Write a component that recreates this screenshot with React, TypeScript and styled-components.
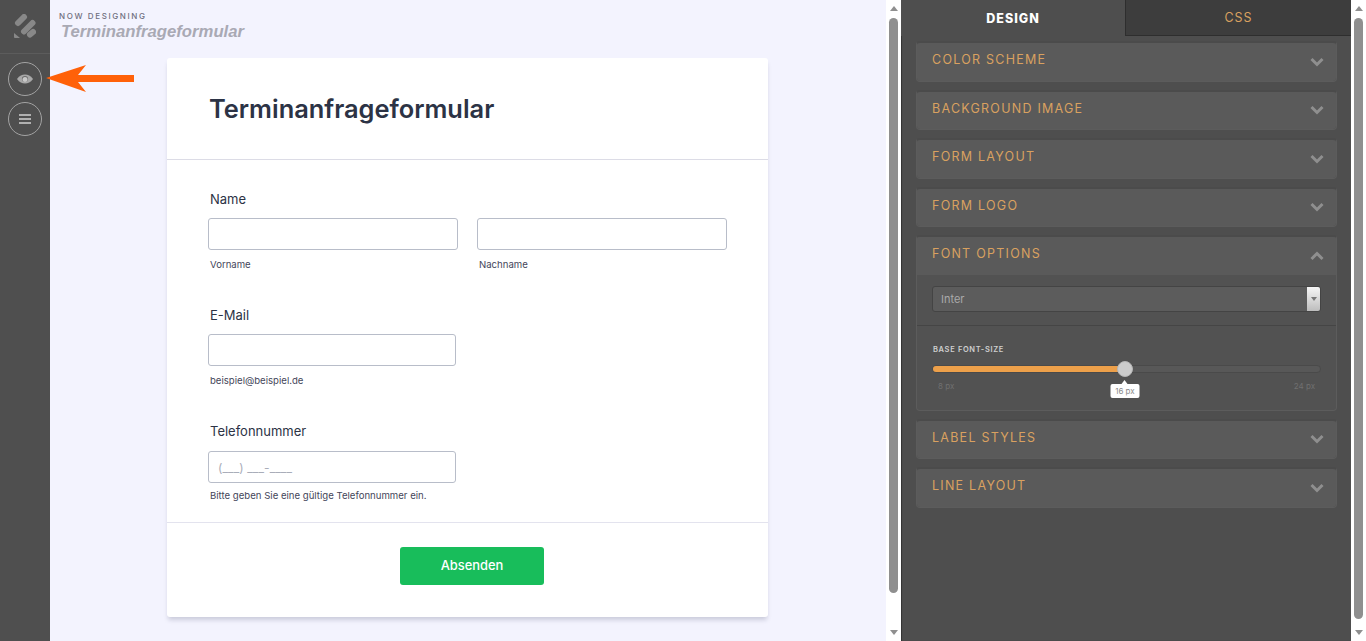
import React from "react";
import styled, { createGlobalStyle } from "styled-components";

const Global = createGlobalStyle`
  html, body { margin: 0; padding: 0; height: 641px; overflow: hidden; }
  body { font-family: Inter, "Liberation Sans", sans-serif; background: #f3f3fe; }
  * { box-sizing: border-box; }
`;

const Page = styled.div`
  display: flex;
  width: 1366px;
  height: 641px;
  overflow: hidden;
`;

const Rail = styled.aside`
  width: 50px;
  flex: none;
  background: #4f4f4f;
  display: flex;
  flex-direction: column;
  align-items: center;
`;

const RailLogo = styled.div`
  width: 100%;
  height: 54px;
  border-bottom: 1px solid #5c5c5c;
  display: flex;
  align-items: center;
  justify-content: center;
`;

const RailButtons = styled.div`
  display: flex;
  flex-direction: column;
  gap: 6px;
  padding-top: 8px;
`;

const RailButton = styled.button`
  width: 34px;
  height: 34px;
  padding: 0;
  border-radius: 50%;
  border: 1px solid #a3a3a3;
  background: transparent;
  display: flex;
  align-items: center;
  justify-content: center;
`;

const Canvas = styled.main`
  position: relative;
  flex: 1;
  min-width: 0;
  background: #f3f3fe;
  display: flex;
  flex-direction: column;
`;

const Heading = styled.header`
  height: 58px;
  flex: none;
  padding: 11px 0 0 9px;
`;

const Eyebrow = styled.div`
  font-size: 8px;
  line-height: 10px;
  font-weight: 500;
  letter-spacing: 1.63px;
  color: #6f6f80;
`;

const FormName = styled.div`
  margin: 1px 0 0 2px;
  font-family: "Liberation Sans", Arial, sans-serif;
  font-size: 16.7px;
  line-height: 20px;
  font-weight: 700;
  font-style: italic;
  color: #a9a9b4;
`;

const Arrow = styled.svg`
  position: absolute;
  left: -4px;
  top: 64px;
`;

const Card = styled.section`
  width: 601px;
  height: 559px;
  margin-left: 117px;
  background: #fff;
  border-radius: 3px;
  box-shadow: 0 4px 4px -1px rgba(87, 90, 120, 0.25);
  display: flex;
  flex-direction: column;
`;

const CardHead = styled.div`
  height: 102px;
  flex: none;
  padding: 36px 0 0 42px;
  border-bottom: 1px solid #dcdce6;
`;

const Title = styled.h1`
  margin: 0;
  font-size: 25.4px;
  line-height: 30px;
  font-weight: 600;
  color: #2c3345;
  letter-spacing: 0;
`;

const Fields = styled.div`
  flex: 1;
  padding: 31px 41px 0;
  border-bottom: 1px solid #e3e3ee;
`;

const Field = styled.div<{ $after: number }>`
  margin-bottom: ${(p) => p.$after}px;
`;

const Label = styled.div<{ $gap: number }>`
  margin-left: 2px;
  font-size: 13px;
  line-height: 17px;
  font-weight: 400;
  color: #2c3345;
  margin-bottom: ${(p) => p.$gap}px;
`;

const Pair = styled.div`
  display: flex;
  gap: 19px;
`;

const InputCol = styled.div<{ $width: number }>`
  width: ${(p) => p.$width}px;
`;

const Input = styled.div`
  height: 32px;
  background: #fff;
  border: 1px solid #b8bdc9;
  border-radius: 3px;
  padding: 0 9px;
  display: flex;
  align-items: center;
  font-size: 12px;
  letter-spacing: 0.12px;
  color: #a9adb9;
`;

const Hint = styled.div<{ $gap: number }>`
  margin: ${(p) => p.$gap}px 0 0 2px;
  font-size: 9.6px;
  line-height: 12px;
  color: #44465a;
`;

const CardFoot = styled.div`
  height: 94px;
  flex: none;
  padding: 24px 0 0 233px;
`;

const Submit = styled.button`
  width: 144px;
  height: 38px;
  border: 0;
  border-radius: 3px;
  padding: 0 0 2px;
  background: #18bd5b;
  color: #fff;
  font-family: inherit;
  font-size: 12.9px;
  font-weight: 500;
`;

const Scrollbar = styled.div<{ $end: number }>`
  width: 15px;
  height: 641px;
  flex: none;
  background: #fff;
  display: flex;
  flex-direction: column;
  align-items: center;
  padding-top: 6px;

  & > i {
    flex: none;
    display: block;
    width: 0;
    height: 0;
    border-left: 4.5px solid transparent;
    border-right: 4.5px solid transparent;
    border-bottom: 5px solid #8f8f8f;
  }
  & > b {
    display: block;
    width: 9px;
    margin-top: 7px;
    height: ${(p) => p.$end - 18}px;
    background: #8f8f8f;
    border-radius: 4.5px;
  }
  & > u {
    display: block;
    width: 0;
    height: 0;
    margin-top: auto;
    margin-bottom: 6px;
    border-left: 4.5px solid transparent;
    border-right: 4.5px solid transparent;
    border-top: 5px solid #8f8f8f;
  }
`;

const Panel = styled.aside`
  width: 450px;
  flex: none;
  background: #4e4e4e;
  display: flex;
  flex-direction: column;
  box-shadow: inset 1px 0 1px #333;
`;

const Tabs = styled.div`
  display: flex;
  height: 36px;
  flex: none;
`;

const Tab = styled.div<{ $active?: boolean }>`
  width: ${(p) => (p.$active ? 224 : 226)}px;
  display: flex;
  align-items: center;
  justify-content: center;
  font-size: 12.5px;
  letter-spacing: 1px;
  font-weight: ${(p) => (p.$active ? 800 : 400)};
  color: ${(p) => (p.$active ? "#fff" : "#d9a160")};
  background: ${(p) => (p.$active ? "#4e4e4e" : "#3d3d3d")};
  border-left: ${(p) => (p.$active ? "0" : "1px solid #2e2e2e")};
  border-bottom: ${(p) => (p.$active ? "0" : "1px solid #2e2e2e")};
`;

const Sections = styled.div`
  display: flex;
  flex-direction: column;
  gap: 8px;
  padding: 5px 14px 0 15px;
`;

const Section = styled.div`
  background: #5a5a5a;
  border: 1px solid #5c5c5c;
  border-top: 2px solid #4b4b4b;
  border-radius: 4px;
  overflow: hidden;
`;

const SectionHead = styled.div`
  height: 37.5px;
  padding: 0 12px 0 15px;
  background: #5a5a5a;
  display: flex;
  align-items: center;
  justify-content: space-between;
`;

const SectionTitle = styled.span`
  font-size: 12.5px;
  letter-spacing: 1.25px;
  color: #d9a160;
  margin-top: -4px;
`;

const SelectRow = styled.div`
  height: 51px;
  padding: 11px 15px 0;
  background: #525252;
  border-bottom: 1px solid #454545;
`;

const Select = styled.div`
  height: 26px;
  background: #5c5c5c;
  border: 1px solid #444;
  border-radius: 3px;
  display: flex;
  align-items: center;
  justify-content: space-between;
  padding-left: 8px;
  font-size: 11px;
  color: #a9a9a9;
  overflow: hidden;
`;

const SelectCaret = styled.span`
  width: 13px;
  height: 24px;
  background: linear-gradient(#f6f6f6, #bdbdbd);
  display: flex;
  align-items: center;
  justify-content: center;

  &::before {
    content: "";
    border-left: 3px solid transparent;
    border-right: 3px solid transparent;
    border-top: 4px solid #777;
  }
`;

const SliderBox = styled.div`
  height: 84px;
  padding: 19px 15px 0;
  background: #525252;
`;

const SliderLabel = styled.div`
  margin-left: 1px;
  font-size: 7.5px;
  line-height: 10px;
  font-weight: 600;
  letter-spacing: 0.65px;
  color: #cfcfcf;
`;

const Track = styled.div`
  position: relative;
  margin-top: 10px;
  height: 8px;
  background: #585858;
  border: 1px solid #4a4a4a;
  border-radius: 4px;
`;

const Fill = styled.div`
  height: 100%;
  background: #eda04a;
  border-radius: 3px 0 0 3px;
`;

const Thumb = styled.div`
  position: absolute;
  top: -5px;
  width: 16px;
  height: 16px;
  margin-left: -8px;
  border-radius: 50%;
  background: #cccccc;
  border: 1px solid #b5b5b5;
`;

const Tip = styled.div`
  position: absolute;
  top: 18px;
  transform: translateX(-50%);
  width: 29px;
  height: 14px;
  background: #fff;
  border-radius: 2px;
  font-size: 8px;
  line-height: 14px;
  text-align: center;
  color: #8c8c8c;

  &::before {
    content: "";
    position: absolute;
    left: 11px;
    top: -4px;
    border-left: 3.5px solid transparent;
    border-right: 3.5px solid transparent;
    border-bottom: 4px solid #fff;
  }
`;

const Scale = styled.div`
  display: flex;
  justify-content: space-between;
  padding: 8px 6px 0 6px;
  font-size: 8px;
  line-height: 10px;
  color: #707070;
`;

const Chevron = ({ up }: { up?: boolean }) => (
  <svg width="14" height="10" viewBox="0 0 14 10" aria-hidden="true">
    <path
      d={up ? "M1.5 8 7 2.5 12.5 8" : "M1.5 2 7 7.5 12.5 2"}
      fill="none"
      stroke="#8f8f8f"
      strokeWidth="3"
    />
  </svg>
);

const closedTop = ["COLOR SCHEME", "BACKGROUND IMAGE", "FORM LAYOUT", "FORM LOGO"];
const closedBottom = ["LABEL STYLES", "LINE LAYOUT"];

const Closed = ({ title }: { title: string }) => (
  <Section>
    <SectionHead>
      <SectionTitle>{title}</SectionTitle>
      <Chevron />
    </SectionHead>
  </Section>
);

export default function App() {
  return (
    <Page>
      <Global />
      <Rail>
        <RailLogo>
          <svg width="22" height="26" viewBox="14 14 22 26" aria-hidden="true">
            <g fill="none" stroke="#888" strokeLinecap="round" strokeWidth="6">
              <path d="M18 23 24 17" />
              <path d="M24 31.500 32.500 23" />
              <path d="M30 34.500 33 32" />
            </g>
            <path d="M14 33 20 38H15a1 1 0 0 1-1-1z" fill="#888" />
          </svg>
        </RailLogo>
        <RailButtons>
          <RailButton aria-label="Vorschau">
            <svg width="16" height="10" viewBox="0 0 16 10" aria-hidden="true">
              <path
                d="M0 5C2.500 1.500 5 .5 8 .5s5.500 1 8 4.500c-2.500 3.500-5 4.500-8 4.500S2.500 8.500 0 5z"
                fill="#a8a8a8"
              />
              <circle cx="8" cy="5" r="3.100" fill="#6a6a6a" />
              <circle cx="8" cy="5.500" r="2.500" fill="#c8c8c8" />
            </svg>
          </RailButton>
          <RailButton aria-label="Menü">
            <svg width="14" height="12" viewBox="0 0 14 12" aria-hidden="true">
              <path d="M1 2h12M1 6h12M1 10h12" stroke="#b0b0b0" strokeWidth="2" />
            </svg>
          </RailButton>
        </RailButtons>
      </Rail>
      <Canvas>
        <Arrow width="90" height="30" viewBox="0 0 90 30" aria-hidden="true">
          <path d="M0 14 40 1 32 11H88V18H32L40 28z" fill="#ff6109" />
        </Arrow>
        <Heading>
          <Eyebrow>NOW DESIGNING</Eyebrow>
          <FormName>Terminanfrageformular</FormName>
        </Heading>
        <Card>
          <CardHead>
            <Title>Terminanfrageformular</Title>
          </CardHead>
          <Fields>
            <Field $after={36}>
              <Label $gap={10}>Name</Label>
              <Pair>
                <InputCol $width={250}>
                  <Input />
                  <Hint $gap={9}>Vorname</Hint>
                </InputCol>
                <InputCol $width={250}>
                  <Input />
                  <Hint $gap={9}>Nachname</Hint>
                </InputCol>
              </Pair>
            </Field>
            <Field $after={36}>
              <Label $gap={10}>E-Mail</Label>
              <InputCol $width={248}>
                <Input />
                <Hint $gap={9}>beispiel@beispiel.de</Hint>
              </InputCol>
            </Field>
            <Field $after={0}>
              <Label $gap={11}>Telefonnummer</Label>
              <InputCol $width={248}>
                <Input>(___) ___-____</Input>
                <Hint $gap={7}>Bitte geben Sie eine gültige Telefonnummer ein.</Hint>
              </InputCol>
            </Field>
          </Fields>
          <CardFoot>
            <Submit>Absenden</Submit>
          </CardFoot>
        </Card>
      </Canvas>
      <Scrollbar $end={593}>
        <i />
        <b />
        <u />
      </Scrollbar>
      <Panel>
        <Tabs>
          <Tab $active>DESIGN</Tab>
          <Tab>CSS</Tab>
        </Tabs>
        <Sections>
          {closedTop.map((t) => (
            <Closed key={t} title={t} />
          ))}
          <Section>
            <SectionHead>
              <SectionTitle>FONT OPTIONS</SectionTitle>
              <Chevron up />
            </SectionHead>
            <SelectRow>
              <Select>
                Inter
                <SelectCaret />
              </Select>
            </SelectRow>
            <SliderBox>
              <SliderLabel>BASE FONT-SIZE</SliderLabel>
              <Track>
                <Fill style={{ width: "49.6%" }} />
                <Thumb style={{ left: "49.6%" }} />
                <Tip style={{ left: "49.6%" }}>16 px</Tip>
              </Track>
              <Scale>
                <span>8 px</span>
                <span>24 px</span>
              </Scale>
            </SliderBox>
          </Section>
          {closedBottom.map((t) => (
            <Closed key={t} title={t} />
          ))}
        </Sections>
      </Panel>
      <Scrollbar $end={619}>
        <i />
        <b />
        <u />
      </Scrollbar>
    </Page>
  );
}
